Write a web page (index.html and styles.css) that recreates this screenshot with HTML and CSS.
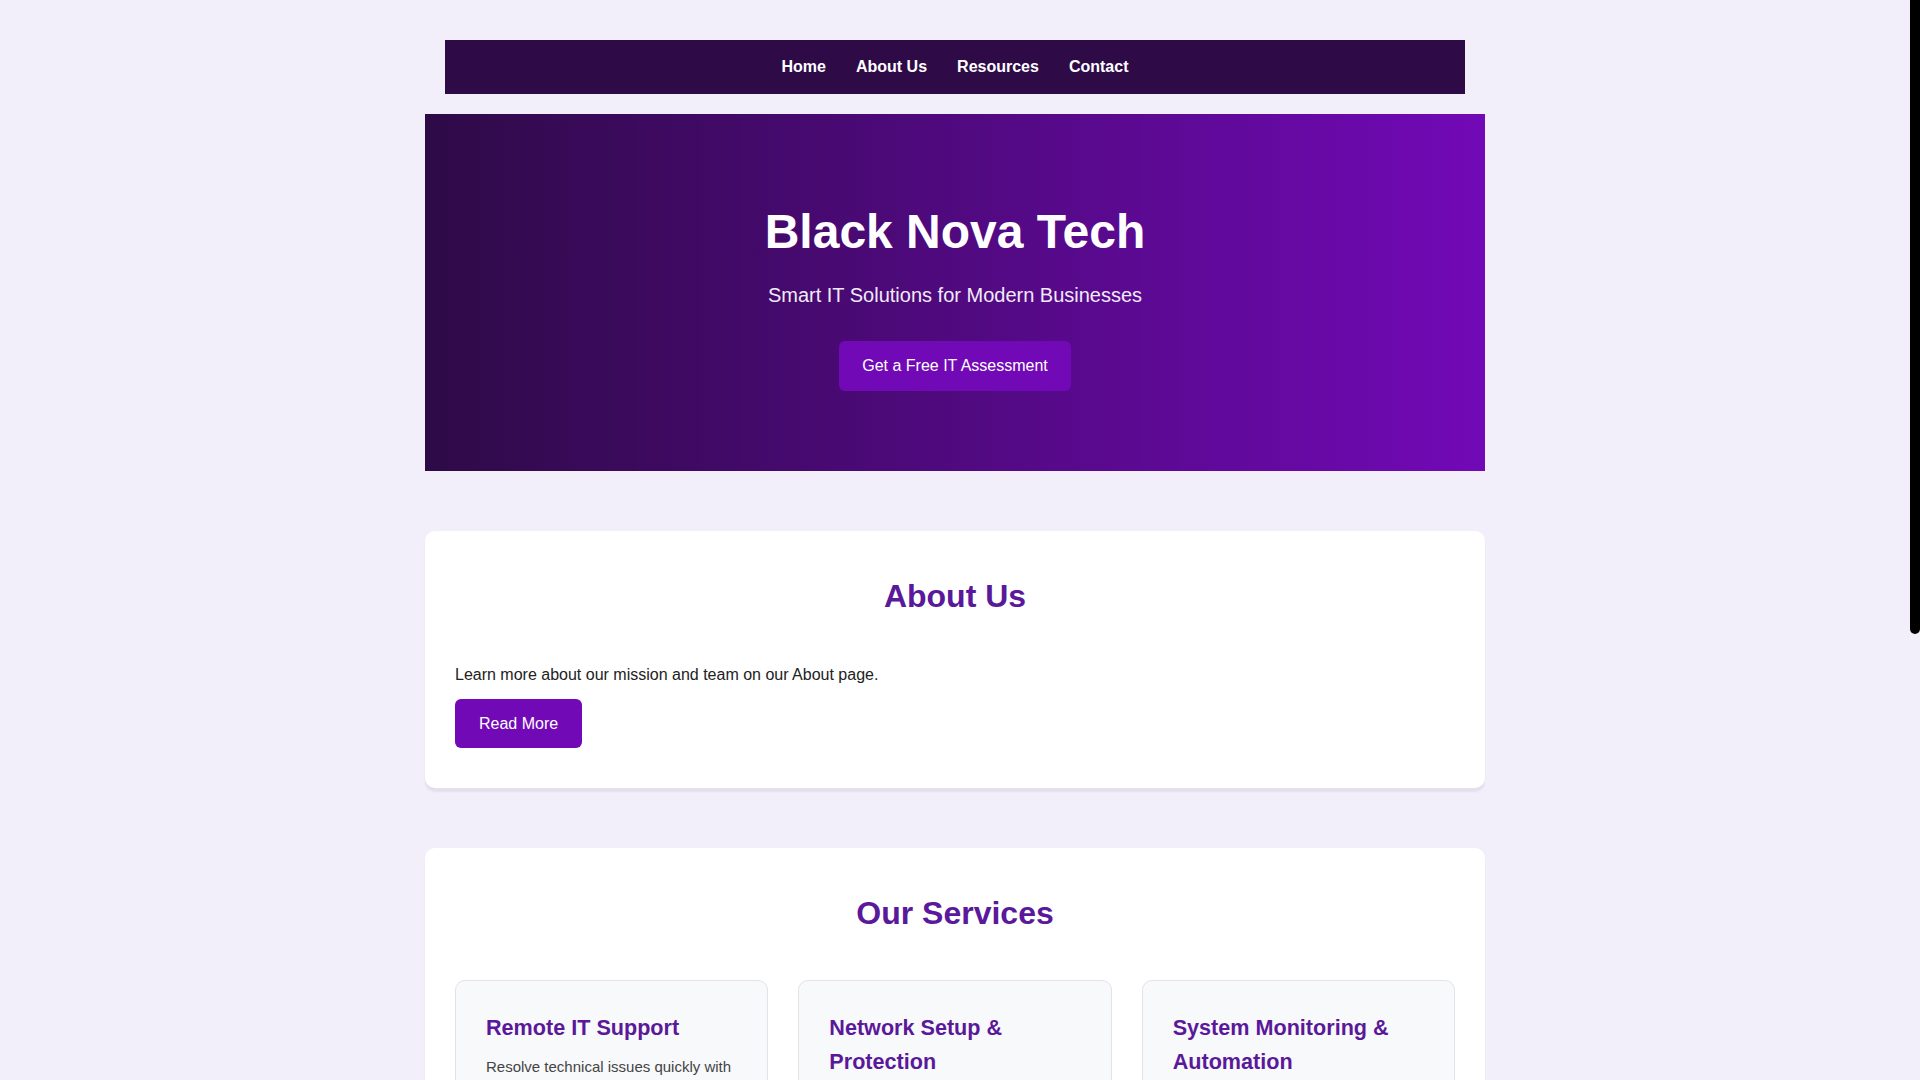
FILE: index.html
```html
<!DOCTYPE html>
<html lang="en">
<head>
<meta charset="utf-8">
<title>Black Nova Tech</title>
<link rel="stylesheet" href="styles.css">
</head>
<body>
<header class="site-header">
  <nav class="nav">
    <a href="#" class="nav-link">Home</a>
    <a href="#" class="nav-link">About Us</a>
    <a href="#" class="nav-link">Resources</a>
    <a href="#" class="nav-link">Contact</a>
  </nav>
</header>
<main class="container">
  <section class="hero">
    <h1 class="hero-title">Black Nova Tech</h1>
    <p class="hero-sub">Smart IT Solutions for Modern Businesses</p>
    <a href="#" class="btn">Get a Free IT Assessment</a>
  </section>

  <section class="panel">
    <h2 class="panel-title">About Us</h2>
    <p class="panel-text">Learn more about our mission and team on our About page.</p>
    <a href="#" class="btn">Read More</a>
  </section>

  <section class="panel">
    <h2 class="panel-title">Our Services</h2>
    <div class="cards">
      <div class="card">
        <h3 class="card-title">Remote IT Support</h3>
        <p class="card-text">Resolve technical issues quickly with secure remote assistance from our experienced technicians.</p>
      </div>
      <div class="card">
        <h3 class="card-title">Network Setup &amp; Protection</h3>
        <p class="card-text">Reliable, secure networks designed and configured for your office, with firewalls and ongoing protection.</p>
      </div>
      <div class="card">
        <h3 class="card-title">System Monitoring &amp; Automation</h3>
        <p class="card-text">Around-the-clock monitoring and automated maintenance that keep your systems healthy and up to date.</p>
      </div>
    </div>
  </section>

  <section class="panel">
    <h2 class="panel-title">Contact</h2>
    <p class="panel-text">Have a question or need support? Reach out and our team will get back to you shortly.</p>
    <a href="#" class="btn">Contact Us</a>
  </section>
</main>
<footer class="footer">
  <p class="footer-text">&copy; 2025 Black Nova Tech. All rights reserved.</p>
</footer>
<div class="scrollbar" aria-hidden="true"><div class="scrollbar-thumb"></div></div>
</body>
</html>
```

FILE: styles.css
```css
html {
  background: #f3effa;
}

body {
  margin: 0;
  padding-right: 10px;
  background: #f3effa;
  font-family: "Liberation Sans", Arial, Helvetica, sans-serif;
  font-size: 16px;
  line-height: 1.6;
  color: #222222;
}

.scrollbar {
  position: fixed;
  top: 0;
  right: 0;
  width: 10px;
  height: 100vh;
  background: #f3effa;
}

.scrollbar-thumb {
  width: 10px;
  height: 634px;
  background: #000000;
  border-radius: 0 0 5px 5px;
}

.site-header {
  max-width: 1060px;
  margin: 0 auto;
  padding: 40px 20px 20px;
  box-sizing: border-box;
}

.nav {
  display: flex;
  justify-content: center;
  background: #2e0a47;
  padding: 14px 0;
}

.nav-link {
  color: #ffffff;
  text-decoration: none;
  font-weight: bold;
  margin: 0 15px;
}

.container {
  max-width: 1060px;
  margin: 0 auto;
  display: flex;
  flex-direction: column;
  gap: 60px;
}

.hero {
  display: flex;
  flex-direction: column;
  align-items: center;
  text-align: center;
  padding: 80px 20px 80px;
  background: linear-gradient(90deg, #2e0a47 0%, #7209b7 100%);
  color: #ffffff;
}

.hero-title {
  margin: 0 0 9px;
  font-size: 48px;
  font-weight: bold;
}

.hero-sub {
  margin: 0 0 30px;
  font-size: 20px;
  color: #f1eaf8;
}

.btn {
  display: inline-block;
  align-self: flex-start;
  background: #7209b7;
  color: #ffffff;
  text-decoration: none;
  padding: 12px 24px;
  border-radius: 6px;
  font-size: 16px;
}

.hero .btn {
  align-self: center;
  padding: 12px 23px;
}

.panel {
  background: #ffffff;
  border-radius: 10px;
  padding: 40px 30px;
  box-shadow: 0 4px 2px rgba(40, 20, 70, 0.07);
  display: flex;
  flex-direction: column;
}

.panel-title {
  margin: 0 0 40px;
  text-align: center;
  font-size: 32px;
  font-weight: bold;
  color: #5a189a;
}

.panel-text {
  margin: 0 0 11px;
}

.cards {
  display: grid;
  grid-template-columns: repeat(3, 1fr);
  gap: 30px;
}

.card {
  background: #f8f9fb;
  border: 1px solid #e2e2e8;
  border-radius: 10px;
  padding: 30px;
}

.card-title {
  margin: 0 0 10px;
  font-size: 21.6px;
  font-weight: bold;
  color: #5a189a;
}

.card-text {
  margin: 0;
  font-size: 15px;
  color: #444444;
}

.footer {
  max-width: 1060px;
  margin: 60px auto 0;
  padding: 30px 0 40px;
  text-align: center;
}

.footer-text {
  margin: 0;
  font-size: 14px;
  color: #666666;
}
```
